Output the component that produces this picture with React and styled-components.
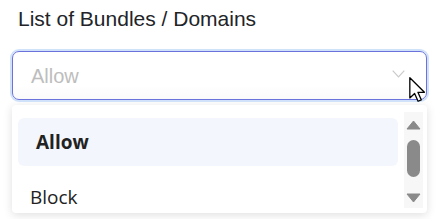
import React from 'react';
import styled, { createGlobalStyle } from 'styled-components';

const GlobalStyle = createGlobalStyle`
  html, body {
    margin: 0;
    padding: 0;
    background: #ffffff;
  }
`;

const Page = styled.div`
  width: 437px;
  height: 219px;
  box-sizing: border-box;
  padding: 0 10px 0 12px;
  overflow: hidden;
`;

const Label = styled.div`
  padding: 6px 0 0 6px;
  font-family: 'Liberation Sans', Arial, sans-serif;
  font-size: 21px;
  line-height: 25px;
  color: #222428;
`;

const SelectBox = styled.div`
  position: relative;
  display: flex;
  align-items: center;
  justify-content: space-between;
  box-sizing: border-box;
  height: 49px;
  margin-top: 20px;
  padding: 0 21px 0 18px;

  background: linear-gradient(#ffffff 70%, #fafafa);
  border: 1px solid #6c72dc;
  border-radius: 7px;
  box-shadow: 0 0 0 2px #d0e2fa;
`;

const Placeholder = styled.span`
  font-family: 'Liberation Sans', Arial, sans-serif;
  font-size: 20px;
  line-height: 24px;
  color: #bdbdbd;
`;

const Chevron = styled.svg`
  display: block;
  width: 13px;
  height: 8px;
  margin-top: -4px;
`;

const Cursor = styled.svg`
  position: absolute;
  left: 396px;
  top: 25px;
  width: 19px;
  height: 26px;
`;

const Dropdown = styled.div`
  display: flex;
  align-items: flex-start;
  gap: 6px;
  box-sizing: border-box;
  height: 108px;
  margin-top: 5px;
  padding: 7px 4px 5px 6px;
  overflow: hidden;

  background: #ffffff;
  border-radius: 4px;
  box-shadow: 0 2px 10px rgba(0, 0, 0, 0.13);
`;

const List = styled.div`
  flex: 1;
  display: flex;
  flex-direction: column;
  gap: 7px;
  padding-top: 6px;
`;

const Item = styled.div`
  display: flex;
  align-items: center;
  height: 48px;
  padding-left: ${({ selected }) => (selected ? '18px' : '12px')};

  font-family: 'Open Sans', 'Noto Sans', sans-serif;
  font-size: 19px;
  font-weight: ${({ selected }) => (selected ? 700 : 400)};
  color: #222222;
  background: ${({ selected }) => (selected ? '#f3f6fc' : 'transparent')};
  border-radius: 6px;
`;

const Scrollbar = styled.div`
  align-self: stretch;
  display: flex;
  flex-direction: column;
  align-items: center;
  width: 19px;
  padding-top: 8px;
  box-sizing: border-box;
  background: #f7f7f7;
`;

const Arrow = styled.svg`
  display: block;
  width: 15px;
  height: 10px;
`;

const Thumb = styled.div`
  width: 13px;
  height: 37px;
  margin: 10px 0 16px;
  background: #8a8a8a;
  border-radius: 7px;
`;

const options = ['Allow', 'Block'];

const App = () => {
  const selected = 'Allow';

  return (
    <Page>
      <GlobalStyle />
      <Label>List of Bundles / Domains</Label>
      <SelectBox>
        <Placeholder>Allow</Placeholder>
        <Chevron viewBox="0 0 13 8">
          <path d="M0.7 0.7 L6.5 6.8 L12.3 0.7" fill="none" stroke="#cacaca" strokeWidth="1.2" />
        </Chevron>
        <Cursor viewBox="0 0 13 18">
          <path
            d="M0.5 0.5 L0.5 14.5 L3.8 11.4 L6.2 16.8 L8.4 15.8 L6.1 10.6 L10.6 10.6 Z"
            fill="#ffffff"
            stroke="#000000"
            strokeWidth="0.9"
            strokeLinejoin="round"
          />
        </Cursor>
      </SelectBox>
      <Dropdown>
        <List>
          {options.map((option) => (
            <Item key={option} selected={option === selected}>
              {option}
            </Item>
          ))}
        </List>
        <Scrollbar>
          <Arrow viewBox="0 0 15 10">
            <polygon points="7.5,1 14,9 1,9" fill="#8a8a8a" stroke="#8a8a8a" strokeLinejoin="round" />
          </Arrow>
          <Thumb />
          <Arrow viewBox="0 0 15 10">
            <polygon points="1,1 14,1 7.5,9" fill="#8a8a8a" stroke="#8a8a8a" strokeLinejoin="round" />
          </Arrow>
        </Scrollbar>
      </Dropdown>
    </Page>
  );
};

export default App;
